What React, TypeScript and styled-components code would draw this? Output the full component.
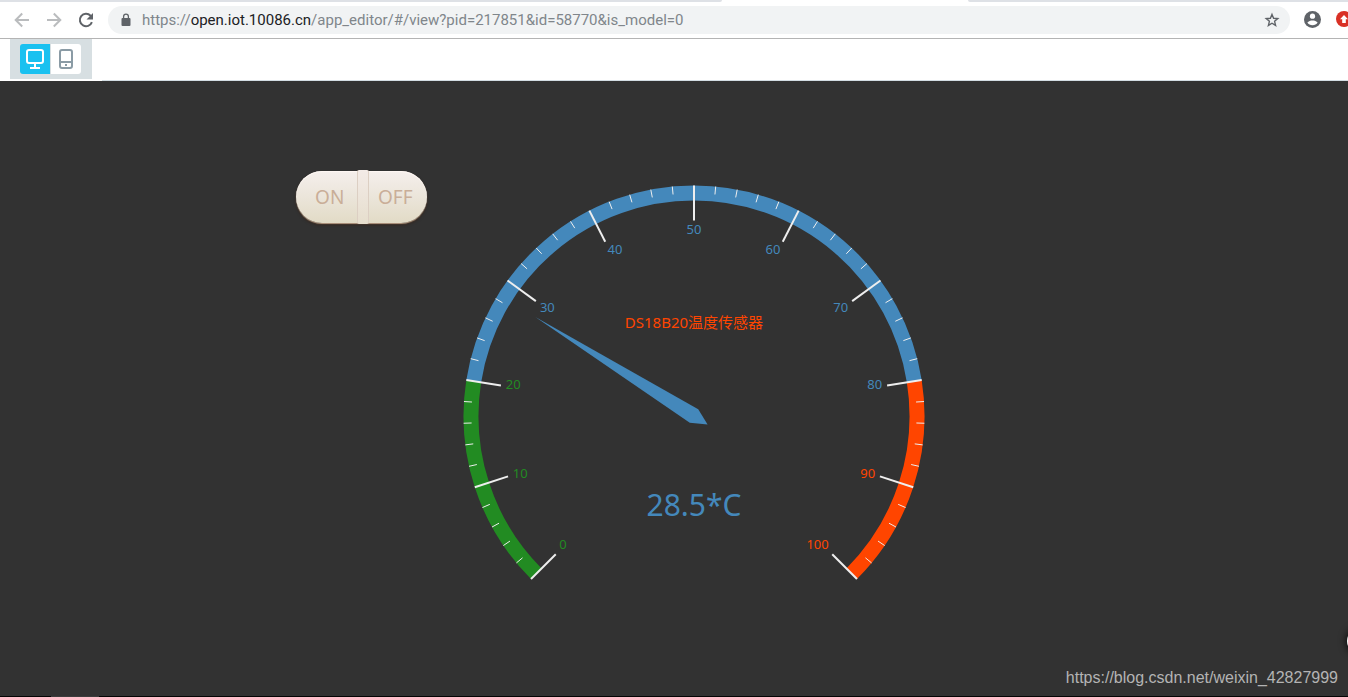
import React, { useState } from 'react';
import styled, { createGlobalStyle } from 'styled-components';

const uiFont = '"Noto Sans", "Noto Sans CJK SC", sans-serif';

const GlobalStyle = createGlobalStyle`
  *, *::before, *::after { box-sizing: border-box; }
  body { margin: 0; background: #323232; font-family: ${uiFont}; }
  button { font: inherit; border: 0; padding: 0; margin: 0; background: none; cursor: pointer; }
`;

const Page = styled.div`
  display: flex;
  flex-direction: column;
  min-height: 100vh;
  overflow: hidden;
  position: relative;
`;

const TabStrip = styled.div`
  display: flex;
  height: 2px;
  background: #fff;
`;

const TabEdge = styled.div<{ $grow: number; $side: 'left' | 'right' }>`
  flex: ${p => p.$grow};
  background: #dee1e6;
  border-radius: ${p => (p.$side === 'left' ? '0 0 6px 0' : '0 0 0 6px')};
`;

const ActiveTab = styled.div`
  flex: 246;
`;

const BrowserBar = styled.header`
  display: flex;
  align-items: center;
  gap: 14px;
  height: 37px;
  padding: 0 0 1px 14px;
  background: #fff;
  border-bottom: 1px solid #b4b4b4;
  overflow: hidden;
`;

const NavGroup = styled.nav`
  flex: none;
  display: flex;
  gap: 16px;
`;

const NavButton = styled.button<{ $muted?: boolean }>`
  display: flex;
  align-items: center;
  width: 16px;
  height: 28px;
  color: ${p => (p.$muted ? '#babcbe' : '#5f6368')};
`;

const AddressBox = styled.div`
  flex: 1;
  min-width: 0;
  display: flex;
  align-items: center;
  height: 28px;
  padding: 0 10px 0 12px;
  gap: 10px;
  border-radius: 14px;
  background: #f1f3f4;
  color: #5f6368;
`;

const Address = styled.div`
  flex: 1;
  min-width: 0;
  overflow: hidden;
  white-space: nowrap;
  font-family: Roboto, sans-serif;
  font-size: 15px;
  line-height: 20px;
  color: #80868b;
  outline: none;
`;

const Host = styled.span`
  color: #202124;
`;

const IconButton = styled.button`
  flex: none;
  display: flex;
  color: #5f6368;
`;

const Extensions = styled.div`
  flex: none;
  display: flex;
  gap: 15px;
  margin-right: -4px;
`;

const EditorBar = styled.div`
  display: flex;
  align-items: flex-start;
  height: 42px;
  padding-left: 10px;
  background: #fff;
  gap: 10px;
`;

const DeviceGroup = styled.div`
  display: flex;
  gap: 1px;
  height: 40px;
  padding: 5px 11px 5px 10px;
  background: #d7dfe2;
`;

const DeviceButton = styled.button<{ $active: boolean }>`
  display: flex;
  align-items: center;
  justify-content: center;
  width: 30px;
  background: ${p => (p.$active ? '#1ac1f0' : '#fff')};
  color: ${p => (p.$active ? '#fff' : '#8a9ba5')};

  &:first-child { border-radius: 3px 0 0 3px; }
  &:last-child { border-radius: 0 3px 3px 0; }
`;

const BarRule = styled.div`
  flex: 1;
  align-self: flex-end;
  height: 1px;
  background: #d3dde3;
`;

const Stage = styled.main`
  flex: 1;
  display: flex;
  align-items: flex-start;
  gap: 35px;
  padding: 90px 0 20px calc(50% - 378px);
  background: #323232;
`;

const Switch = styled.div`
  flex: none;
  display: flex;
  width: 131px;
  height: 52px;
  border-radius: 26px;
  background: linear-gradient(#f5efec, #ebe5da 50%, #e2dbc6);
  box-shadow: 0 1px 1px #b59b83, 0 2px 3px #33241b, inset 0 1px 1px #fff8f4;
`;

const SwitchButton = styled.button`
  flex: 1;
  color: #c9ae98;
  font-size: 19px;
  line-height: 52px;

  &:first-child { padding-left: 7px; }
  &:last-child { padding-right: 5px; }
`;

const SwitchDivider = styled.span`
  width: 12px;
  height: 54px;
  margin-top: -1px;
  border: solid #dccfc3;
  border-width: 0 1px;
  border-radius: 2px;
  background: linear-gradient(#f3ebe7, #e6decd);
`;

const GaugeFigure = styled.figure`
  flex: none;
  margin: 13px 0 0;
`;

const GaugeSvg = styled.svg`
  display: block;
  width: 464px;
  height: 396px;
  overflow: visible;
`;

const GaugeText = styled.text<{ $size: number }>`
  font-family: ${uiFont};
  font-size: ${p => p.$size}px;
`;

const Footer = styled.footer`
  height: 1px;
  padding-left: 51px;
  background: #050505;
`;

const FooterMark = styled.div`
  width: 48px;
  height: 1px;
  background: #3c3c3c;
`;

const Watermark = styled.a`
  position: absolute;
  right: 10px;
  bottom: 9px;
  font-family: "Liberation Sans", Arial, sans-serif;
  font-size: 16px;
  line-height: 20px;
  color: #b4b4b4;
  text-decoration: none;
`;

const FloatingButton = styled.button`
  position: absolute;
  right: -23px;
  bottom: 44px;
  width: 24px;
  height: 24px;
  border-radius: 12px;
  background: #fff;
  box-shadow: 0 0 8px #000;
`;

const BLUE = '#4488bb';
const GREEN = '#228b22';
const RED = '#ff4500';
const CX = 232;
const CY = 232;
const R = 230.5;

const toAngle = (value: number) => ((225 - value * 2.7) * Math.PI) / 180;
const point = (value: number, radius: number) => {
  const a = toAngle(value);
  return { x: CX + radius * Math.cos(a), y: CY - radius * Math.sin(a) };
};

const bands = [
  { from: 0, to: 20, color: GREEN },
  { from: 20, to: 80, color: BLUE },
  { from: 80, to: 100, color: RED },
];

function arc(from: number, to: number, radius: number) {
  const a = point(from, radius);
  const b = point(to, radius);
  const large = (to - from) * 2.7 > 180 ? 1 : 0;
  return `M${a.x} ${a.y}A${radius} ${radius} 0 ${large} 1 ${b.x} ${b.y}`;
}

function labelColor(value: number) {
  if (value <= 20) return GREEN;
  return value <= 80 ? BLUE : RED;
}

// Labels hang below their tick on the upper arc and sit above it at the ends.
function labelShift(value: number) {
  const s = Math.sin(toAngle(value));
  if (s > 0.4) return 8;
  return s < -0.4 ? -2 : 3;
}

function Gauge({ value, title }: { value: number; title: string }) {
  const ticks = Array.from({ length: 51 }, (_, i) => i * 2);
  const a = toAngle(value);
  const tip = point(value, 187);
  const tail = point(value, -16);
  const dx = 8 * Math.sin(a);
  const dy = 8 * Math.cos(a);
  return (
    <GaugeFigure>
      <GaugeSvg viewBox="0 0 464 396" role="img" aria-label={`${title} ${value}*C`}>
        {bands.map(b => (
          <path key={b.from} d={arc(b.from, b.to, R - 7.5)} fill="none" stroke={b.color} strokeWidth={15} />
        ))}
        {ticks.map(t => {
          const major = t % 10 === 0;
          const p = point(t, R);
          const q = point(t, major ? R - 35 : R - 8);
          return <line key={t} x1={p.x} y1={p.y} x2={q.x} y2={q.y} stroke="#eee" strokeWidth={major ? 2 : 1} />;
        })}
        {ticks.filter(t => t % 10 === 0).map(t => {
          const p = point(t, R - 40);
          const anchor = t < 45 ? 'start' : t > 55 ? 'end' : 'middle';
          return (
            <GaugeText key={t} $size={13} x={p.x} y={p.y + labelShift(t)} textAnchor={anchor} fill={labelColor(t)}>
              {t}
            </GaugeText>
          );
        })}
        <polygon
          fill={BLUE}
          points={`${tip.x},${tip.y} ${CX + dx},${CY + dy} ${tail.x},${tail.y} ${CX - dx},${CY - dy}`}
        />
        <GaugeText $size={15} x={CX} y={144} textAnchor="middle" fill={RED}>{title}</GaugeText>
        <GaugeText $size={30} x={CX} y={332} textAnchor="middle" fill={BLUE}>{`${value}*C`}</GaugeText>
      </GaugeSvg>
    </GaugeFigure>
  );
}

export default function App() {
  const [device, setDevice] = useState<'desktop' | 'phone'>('desktop');
  return (
    <Page>
      <GlobalStyle />
      <TabStrip>
        <TabEdge $grow={722} $side="left" />
        <ActiveTab />
        <TabEdge $grow={380} $side="right" />
      </TabStrip>
      <BrowserBar>
        <NavGroup>
          <NavButton $muted aria-label="Back">
            <svg width="16" height="16" viewBox="0 0 16 16" fill="none" stroke="currentColor" strokeWidth="2">
              <path d="M15 8H2.5M8.2 1.5L1.7 8l6.5 6.5" />
            </svg>
          </NavButton>
          <NavButton $muted aria-label="Forward">
            <svg width="16" height="16" viewBox="0 0 16 16" fill="none" stroke="currentColor" strokeWidth="2">
              <path d="M1 8h12.5M7.8 1.5L14.3 8l-6.5 6.5" />
            </svg>
          </NavButton>
          <NavButton aria-label="Reload">
            <svg width="16" height="16" viewBox="0 0 16 16" fill="none">
              <path d="M13.9 10.2A6.2 6.2 0 1 1 12.6 3.8L14 5.2" stroke="currentColor" strokeWidth="2" />
              <path d="M15 1v6.5H8.5z" fill="currentColor" />
            </svg>
          </NavButton>
        </NavGroup>
        <AddressBox>
          <svg width="12" height="14" viewBox="0 0 12 14" aria-hidden="true">
            <rect x="1.5" y="5" width="9" height="8" rx="1" fill="currentColor" />
            <path d="M3.6 5.5V3.6a2.4 2.4 0 0 1 4.8 0v1.9" fill="none" stroke="currentColor" strokeWidth="1.3" />
          </svg>
          <Address role="textbox" aria-label="Address" contentEditable suppressContentEditableWarning spellCheck={false}>
            https://<Host>open.iot.10086.cn</Host>/app_editor/#/view?pid=217851&amp;id=58770&amp;is_model=0
          </Address>
          <IconButton aria-label="Bookmark this page">
            <svg width="16" height="16" viewBox="0 0 16 16" fill="none" stroke="currentColor" strokeWidth="1.4">
              <path d="M8 2.4l1.6 3.9 4.2.3-3.2 2.7 1 4.1L8 11.2l-3.6 2.2 1-4.1-3.2-2.7 4.2-.3z" />
            </svg>
          </IconButton>
        </AddressBox>
        <Extensions>
          <IconButton aria-label="Profile">
            <svg width="17" height="17" viewBox="0 0 17 17">
              <circle cx="8.5" cy="8.5" r="8.5" fill="currentColor" />
              <circle cx="8.5" cy="5.2" r="2.6" fill="#fff" />
              <path d="M3.4 11.6c1-1.5 3.2-2.1 5.1-2.1s4.1.6 5.1 2.1c-1 1.7-3 2.7-5.1 2.7s-4.1-1-5.1-2.7z" fill="#fff" />
            </svg>
          </IconButton>
          <IconButton aria-label="Update browser">
            <svg width="16" height="16" viewBox="0 0 16 16">
              <circle cx="8" cy="8" r="8" fill="#d93025" />
              <path d="M8 4l4 4.3H9.8V12H6.2V8.3H4z" fill="#fff" />
            </svg>
          </IconButton>
        </Extensions>
      </BrowserBar>
      <EditorBar>
        <DeviceGroup>
          <DeviceButton $active={device === 'desktop'} aria-label="Desktop view" onClick={() => setDevice('desktop')}>
            <svg width="20" height="20" viewBox="0 0 20 20" fill="none" stroke="currentColor" strokeWidth="2">
              <rect x="2" y="1" width="16" height="13" rx="2" />
              <path d="M10 14v5M5 19h10" />
            </svg>
          </DeviceButton>
          <DeviceButton $active={device === 'phone'} aria-label="Phone view" onClick={() => setDevice('phone')}>
            <svg width="20" height="20" viewBox="0 0 20 20" fill="none" stroke="currentColor" strokeWidth="2">
              <rect x="4" y="1" width="12" height="18" rx="2" />
              <path d="M4 13h12M9 16h2" />
            </svg>
          </DeviceButton>
        </DeviceGroup>
        <BarRule />
      </EditorBar>
      <Stage>
        <Switch>
          <SwitchButton>ON</SwitchButton>
          <SwitchDivider />
          <SwitchButton>OFF</SwitchButton>
        </Switch>
        <Gauge value={28.5} title="DS18B20温度传感器" />
      </Stage>
      <Footer>
        <FooterMark />
      </Footer>
      <Watermark href="https://blog.csdn.net/weixin_42827999">https://blog.csdn.net/weixin_42827999</Watermark>
      <FloatingButton aria-label="Open side panel" />
    </Page>
  );
}
